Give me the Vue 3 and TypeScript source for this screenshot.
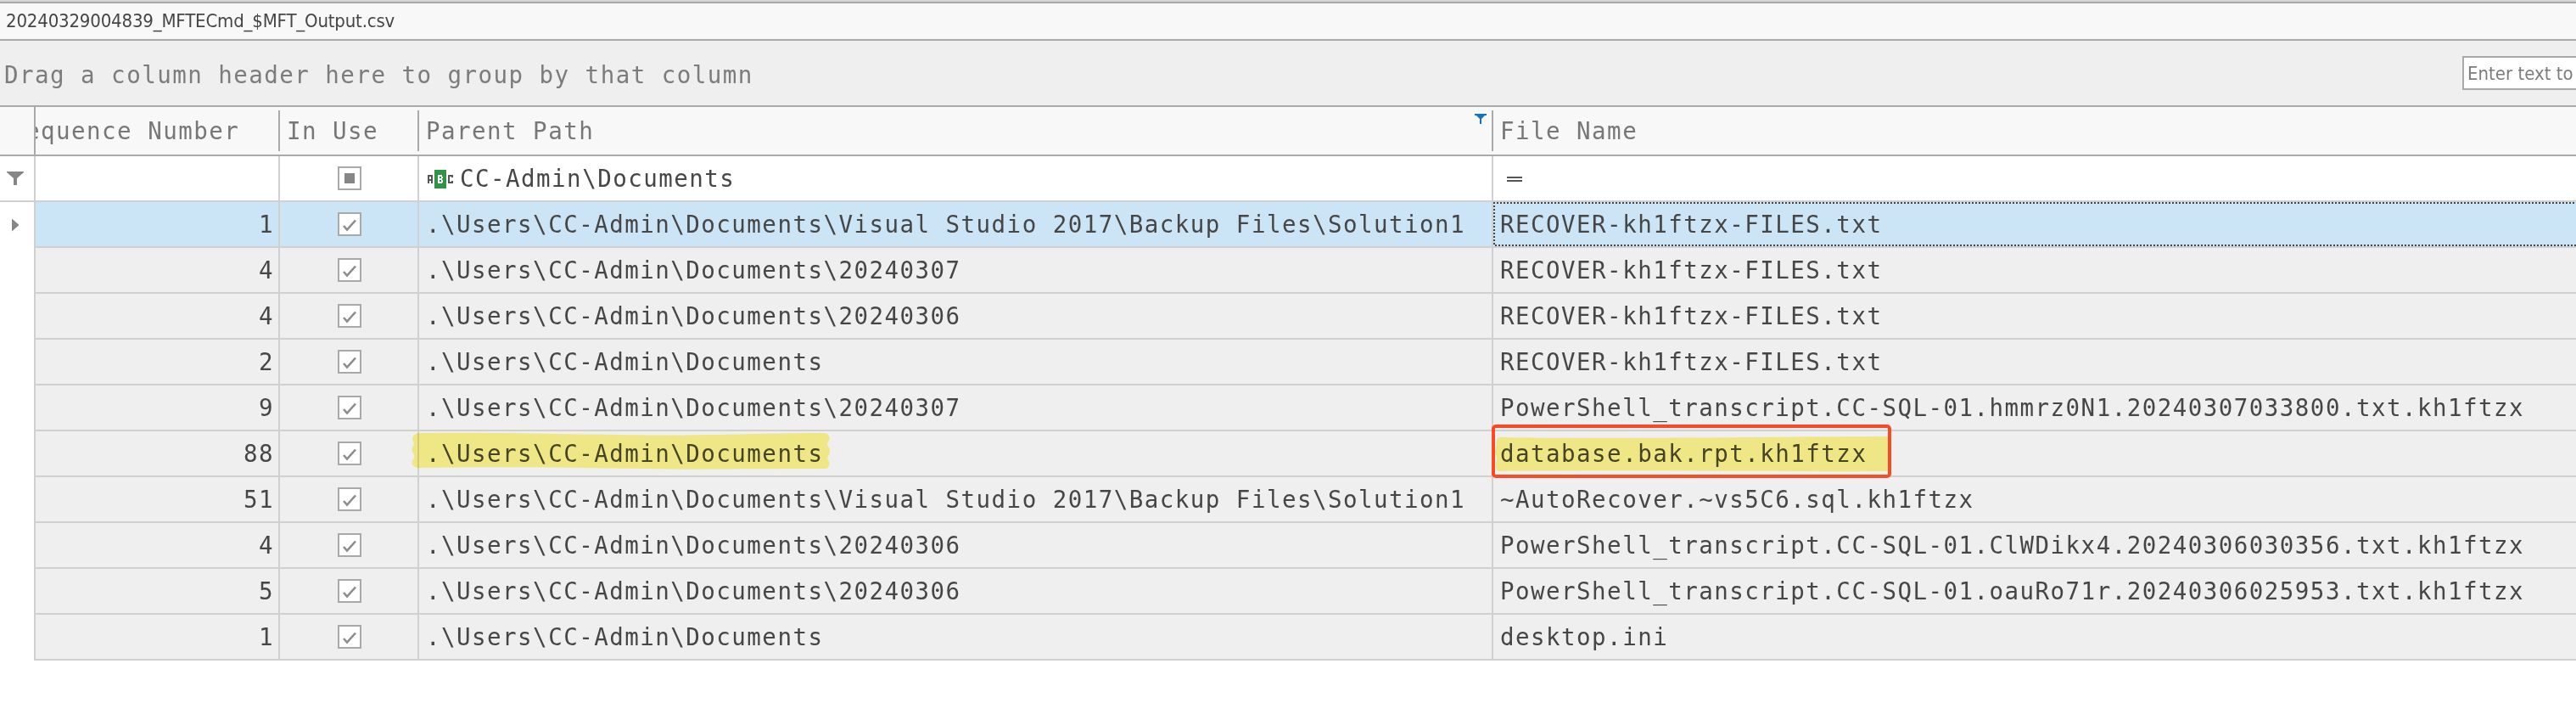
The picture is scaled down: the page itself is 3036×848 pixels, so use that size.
<script setup lang="ts">
interface FileRow {
  seq: number
  path: string
  name: string
  selected?: boolean
  marked?: boolean
}

const docs = '.\\Users\\CC-Admin\\Documents'
const solution = docs + '\\Visual Studio 2017\\Backup Files\\Solution1'

const rows: FileRow[] = [
  { seq: 1, path: solution, name: 'RECOVER-kh1ftzx-FILES.txt', selected: true },
  { seq: 4, path: docs + '\\20240307', name: 'RECOVER-kh1ftzx-FILES.txt' },
  { seq: 4, path: docs + '\\20240306', name: 'RECOVER-kh1ftzx-FILES.txt' },
  { seq: 2, path: docs, name: 'RECOVER-kh1ftzx-FILES.txt' },
  { seq: 9, path: docs + '\\20240307', name: 'PowerShell_transcript.CC-SQL-01.hmmrz0N1.20240307033800.txt.kh1ftzx' },
  { seq: 88, path: docs, name: 'database.bak.rpt.kh1ftzx', marked: true },
  { seq: 51, path: solution, name: '~AutoRecover.~vs5C6.sql.kh1ftzx' },
  { seq: 4, path: docs + '\\20240306', name: 'PowerShell_transcript.CC-SQL-01.ClWDikx4.20240306030356.txt.kh1ftzx' },
  { seq: 5, path: docs + '\\20240306', name: 'PowerShell_transcript.CC-SQL-01.oauRo71r.20240306025953.txt.kh1ftzx' },
  { seq: 1, path: docs, name: 'desktop.ini' },
]
</script>

<template>
  <main class="viewer">
    <div class="tab"><span class="tab-title">20240329004839_MFTECmd_$MFT_Output.csv</span></div>

    <div class="group-panel">
      <span class="group-hint">Drag a column header here to group by that column</span>
      <div class="search"><span>Enter text to</span></div>
    </div>

    <div class="grid-row header">
      <div class="corner"></div>
      <div class="head seq-head"><span>Sequence Number</span></div>
      <div class="head use-head"><span>In Use</span></div>
      <div class="head path-head">
        <span>Parent Path</span>
        <svg class="head-funnel" width="14" height="12" viewBox="0 0 14 12">
          <path d="M0 0H14V2H12L8 6V12H6V6L2 2H0Z" fill="#1272c6" />
        </svg>
      </div>
      <div class="head name-head"><span>File Name</span></div>
    </div>

    <div class="grid-row filter">
      <div class="gutter">
        <svg class="funnel" width="20" height="16" viewBox="0 0 20 16">
          <path d="M0 0H20V1L12 8V16H8V8L0 1Z" fill="#868686" />
        </svg>
      </div>
      <div class="cell seq"></div>
      <div class="cell use"><span class="box"><i class="mixed"></i></span></div>
      <div class="cell path">
        <svg class="abc" width="32" height="22" viewBox="0 0 32 22" shape-rendering="crispEdges">
          <path d="M1 16V7H5V16M1 12H5" fill="none" stroke="#555" stroke-width="2" />
          <rect x="8" y="0" width="14" height="22" rx="1" fill="#2f9348" />
          <path d="M12 6H17V8H18V10H17V12H18V15H17V16H12Z" fill="#fff" />
          <path d="M14 8H16V10H14ZM14 12H16V14H14Z" fill="#2f9348" />
          <path d="M29 9V7H25V15H29V13" fill="none" stroke="#555" stroke-width="2" />
        </svg>
        <span>CC-Admin\Documents</span>
      </div>
      <div class="cell name">
        <svg class="equals" width="18" height="6" viewBox="0 0 18 6">
          <path d="M0 0H18V2H0ZM0 4H18V6H0Z" fill="#555" />
        </svg>
      </div>
    </div>

    <div v-for="(row, i) in rows" :key="i" class="grid-row data" :class="{ selected: row.selected }">
      <div class="gutter">
        <svg v-if="row.selected" class="pointer" width="8" height="16" viewBox="0 0 8 16">
          <path d="M0 0.500L8 7.500V8.500L0 15.500Z" fill="#868686" />
        </svg>
      </div>
      <div class="cell seq">{{ row.seq }}</div>
      <div class="cell use">
        <span class="box">
          <svg width="24" height="24" viewBox="0 0 24 24">
            <path d="M5 14L9 18.500L19 7.500" fill="none" stroke="#8c8c8c" stroke-width="2.6" />
          </svg>
        </span>
      </div>
      <div class="cell path">
        <span>{{ row.path }}</span>
        <svg v-if="row.marked" class="marker path-marker" width="494" height="44" viewBox="0 0 494 44">
          <path d="M7 1C120 0 230 4 310 3.500C390 3 430 1 487 1Q494 3 492 10Q488 14 492 18Q495 23 491 28Q489 31 492 34Q494 42 487 43C400 43 340 44 300 43.500C220 42 100 40 7 42Q-1 40 1 34Q5 29 2 25Q-1 20 2 16Q4 13 1 9Q1 3 7 1Z" fill="#fff68e" />
        </svg>
      </div>
      <div class="cell name">
        <span>{{ row.name }}</span>
        <svg v-if="row.selected" class="focus" width="1276" height="52" shape-rendering="crispEdges">
          <path d="M0 1H1276M2 51H1276M1 4V52" fill="none" stroke="#444" stroke-width="2" stroke-dasharray="2 2" />
        </svg>
        <template v-if="row.marked">
          <svg class="marker name-marker" width="467" height="42" viewBox="0 0 467 42">
            <path d="M5 1C120 3 260 1 465 0L467 20L464 41C300 42 170 39 5 41Q0 40 1 33L2 26L0 18L2 9Q0 3 5 1Z" fill="#fff68e" />
          </svg>
          <div class="callout"></div>
        </template>
      </div>
    </div>
  </main>
</template>

<style>
body {
  margin: 0;
  background: #fff;
}
</style>

<style scoped>
.viewer {
  width: 3036px;
  height: 848px;
  overflow: hidden;
  background: #fff;
  color: #464646;
  font: 27.5px/52px "DejaVu Sans Mono", monospace;
  letter-spacing: 1.46px;
  white-space: pre;
}
.viewer * {
  box-sizing: border-box;
}
svg {
  display: block;
  flex: none;
}
.tab {
  height: 48px;
  border-top: 2px solid #d5d5d5;
  border-bottom: 2px solid #a9a9a9;
  background: #f8f8f8;
  box-shadow: inset 0 2px #a9a9a9;
  padding-left: 7px;
}
.tab-title {
  display: block;
  font: 22px/45px "DejaVu Sans Condensed", "DejaVu Sans", sans-serif;
  font-stretch: condensed;
  letter-spacing: -0.18px;
}
.group-panel {
  display: flex;
  justify-content: space-between;
  height: 78px;
  border-bottom: 2px solid #a9a9a9;
  background: #efefef;
  color: #7c7c7c;
}
.group-hint {
  padding-left: 5px;
  line-height: 80px;
}
.search {
  width: 134px;
  height: 40px;
  margin-top: 18px;
  padding-left: 4px;
  border: 2px solid #a9a9a9;
  border-right: 0;
  background: #fff;
  font: 22px/37px "DejaVu Sans Condensed", "DejaVu Sans", sans-serif;
  font-stretch: condensed;
  letter-spacing: 0;
}
.grid-row {
  display: grid;
  grid-template-columns: 42px 288px 164px 1266px 1276px;
}
.header {
  height: 58px;
  border-bottom: 2px solid #a9a9a9;
  background: #f8f8f8;
  color: #777;
  line-height: 56px;
}
.corner {
  border-right: 2px solid #a9a9a9;
}
.head {
  position: relative;
  overflow: hidden;
  padding-left: 8px;
}
.head:not(.name-head)::after {
  content: "";
  position: absolute;
  right: 0;
  top: 4px;
  width: 2px;
  height: 48px;
  background: #a9a9a9;
}
.seq-head {
  padding: 0;
}
.seq-head span {
  display: block;
  margin-left: -30px;
}
.head-funnel {
  position: absolute;
  right: 8px;
  top: 8px;
}
.gutter {
  display: flex;
  align-items: center;
  border-right: 2px solid #d0d0d0;
  background: #fff;
}
.filter .gutter {
  border-bottom: 2px solid #d0d0d0;
}
.funnel {
  margin-left: 8px;
}
.pointer {
  margin-left: 14px;
}
.cell {
  position: relative;
  display: flex;
  align-items: center;
  height: 54px;
  border-right: 2px solid #d0d0d0;
  border-bottom: 2px solid #d0d0d0;
}
.cell span {
  position: relative;
  z-index: 1;
}
.data .cell {
  background: #efefef;
}
.selected .cell {
  background: #cce5f6;
}
.seq {
  justify-content: flex-end;
  padding-right: 5px;
}
.use {
  justify-content: center;
  padding-left: 2px;
}
.box {
  display: flex;
  align-items: center;
  justify-content: center;
  width: 28px;
  height: 28px;
  border: 2px solid #a9a9a9;
  background: #fff;
}
.mixed {
  width: 12px;
  height: 12px;
  background: #868686;
}
.path,
.name {
  padding-left: 8px;
}
.name {
  border-right: 0;
}
.abc {
  margin: 2px 6px 0 2px;
}
.equals {
  margin: 2px 0 0 8px;
}
.focus {
  position: absolute;
  left: 0;
  top: 0;
}
.marker {
  position: absolute;
  z-index: 2;
  mix-blend-mode: multiply;
}
.path-marker {
  left: -9px;
  top: 1px;
}
.name-marker {
  left: 2px;
  top: 6px;
}
.callout {
  position: absolute;
  z-index: 3;
  left: -2px;
  top: -8px;
  width: 471px;
  height: 63px;
  border: 4px solid #f84a24;
  border-radius: 5px;
}
</style>
